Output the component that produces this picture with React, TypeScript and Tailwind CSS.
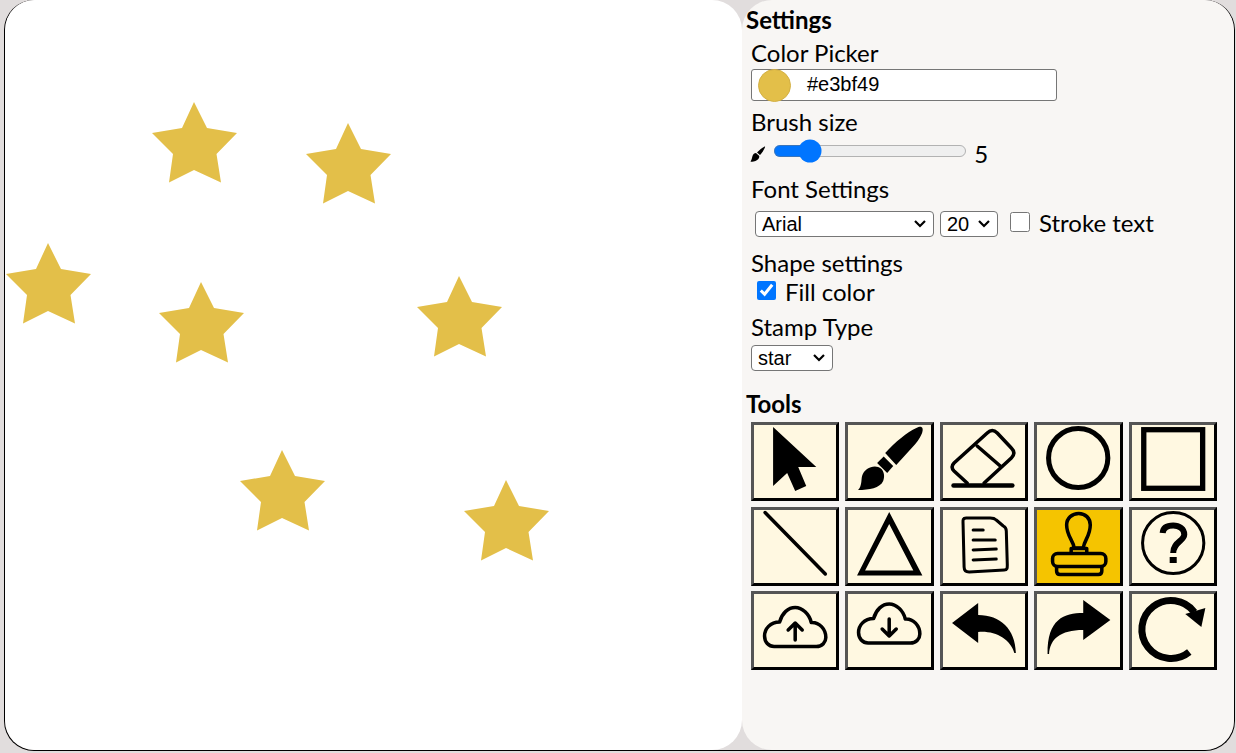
import React from 'react';

const stars = [
  [194, 102],
  [348, 123],
  [48, 243],
  [201, 282],
  [459, 276],
  [282, 450],
  [506, 480],
];

function Icon({ children }: { children: React.ReactNode }) {
  return (
    <svg viewBox="3 3 82 73" preserveAspectRatio="none" className="block w-full h-full">
      {children}
    </svg>
  );
}

const cloud =
  'M23 55.5 H65 C71 55.5 74.5 51 74.5 46.5 C74.5 38 68 31 60 31.5 C58 23 51 16.5 44 16.5 C37 16.5 31 22 28.5 31 C19 31 13.5 38 13.5 45 C13.5 51 17.5 55.5 23 55.5 Z';

const icons: React.ReactNode[] = [
  <path key="cursor" d="M22 5 L65 45 L47 45 L55 64 L44 69 L36 51 L22 64 Z" />,
  <g key="brush">
    <path d="M76 5 C79 6 77 14 70 22 L51 43 L40 31 C50 20 62 10 71 6 C73 5 75 4.500 76 5 Z" />
    <path d="M32 41 L38.500 34.500 L48 44 L42 51 Z" />
    <path d="M13 68 C17 64 16 58 17 54 C19 47 27 43 33 45 C39 47 40 54 38 59 C35 66 24 68 13 68 Z" />
  </g>,
  <g key="eraser" fill="none" stroke="black" strokeWidth="3.500" strokeLinecap="round">
    <path d="M27 61 L14 49 Q10 45 14 41 L47 11 Q52 6 57 11 L71 26 Q76 31 71 36 L44 61" />
    <path d="M37 24 L60 44" />
    <path d="M13.500 63.500 H72" strokeWidth="4.500" />
  </g>,
  <circle key="circle" cx="44" cy="36" r="29.5" fill="none" stroke="black" strokeWidth="5" />,
  <rect key="square" x="14.700" y="7.700" width="58.600" height="58.600" fill="none" stroke="black" strokeWidth="5.300" />,
  <path key="line" d="M14 5.500 L74 67" stroke="black" strokeWidth="3.500" strokeLinecap="round" />,
  <path key="triangle" fillRule="evenodd" d="M44 5 L77 68.500 L12 68.500 Z M44 17 L20 63.500 L68 63.500 Z" />,
  <g key="doc" fill="none" stroke="black" strokeWidth="3" strokeLinecap="round" strokeLinejoin="round">
    <path d="M26 11 C22 11 23 14 23 18 L24 60 C24 64 26 65 29 65 L64 63 C67 63 67 61 67 58 L66 24 C66 21 65 20 63 19 L56 13 C54 11 52 11 50 11 Z" />
    <path d="M33 23 H43 M33 33 H55 M33 43 L56 42 M33 53 L56 52" />
  </g>,
  <g key="stamp" fill="none" stroke="black" strokeWidth="3.500" strokeLinejoin="round">
    <path d="M40 41 C39 33 32.500 29 32.500 18 C32.500 11 38 6.500 44.500 6.500 C51 6.500 56 11 56 18 C56 29 50 33 49 41 Z" />
    <path d="M37 46 V41.500 H52.500 V46" />
    <rect x="18.500" y="46.500" width="53" height="13" rx="5" />
    <path d="M22.500 60 V64 Q22.500 67.500 26 67.500 H64 Q67.500 67.500 67.500 64 V60" />
  </g>,
  <g key="help">
    <circle cx="44" cy="36" r="30.500" fill="none" stroke="black" strokeWidth="3" />
    <path d="M33.500 26 C34 20 39 18.500 44 18.500 C50 18.500 55 22 55 27.500 C55 34 44 35 44 46" fill="none" stroke="black" strokeWidth="6" />
    <rect x="40.500" y="50" width="7" height="6" />
  </g>,
  <g key="upload" fill="none" stroke="black" strokeWidth="3.500" strokeLinecap="round" strokeLinejoin="round">
    <path d={cloud} />
    <path d="M44 49 V32 M37 39 L44 32 L51 39" />
  </g>,
  <g key="download" fill="none" stroke="black" strokeWidth="3.500" strokeLinecap="round" strokeLinejoin="round">
    <path d={cloud} transform="translate(0 -3.500)" />
    <path d="M44 28 V45 M37 38 L44 45 L51 38" />
  </g>,
  <path key="undo" d="M12 32 L38 12 V24 C60 24 75 38 75.500 62 L74 62 C70 48 55 39.500 38 41 V52 Z" />,
  <path key="redo" d="M76 29 L49 9 V22 C30 22 13 28 13.500 63 L15 63 C16 48 26 39 49 39 V49 Z" />,
  <g key="reset">
    <path d="M60 61 A29 29 0 1 1 65 21" fill="none" stroke="black" strokeWidth="7" />
    <path d="M76 17 L72 36 L56 23 Z" />
  </g>,
];

function Field({ children, className }: { children: React.ReactNode; className: string }) {
  return <div className={className}>{children}</div>;
}

function Select({ value, className }: { value: string; className: string }) {
  return (
    <div className={`relative h-[26px] ${className}`}>
      <select
        defaultValue={value}
        className="block w-full h-full pl-[6px] bg-white border border-[#767676] rounded-[4px] font-['Liberation_Sans',sans-serif] text-xl leading-none appearance-none"
      >
        <option>{value}</option>
      </select>
      <svg viewBox="0 0 12 8" className="absolute right-[8px] top-[9px] w-3 h-2 pointer-events-none">
        <path d="M1 1 L6 6 L11 1" fill="none" stroke="black" strokeWidth="2.200" />
      </svg>
    </div>
  );
}

export default function App() {
  return (
    <div className="h-[753px] bg-[#e1dddd] pl-1 pr-[1px] pb-[2px] font-['Lato',sans-serif] text-black">
      <div className="flex h-full border border-black rounded-[30px] border-t-0 overflow-hidden">
        <div className="relative w-[737px] bg-white rounded-[30px]">
          <svg className="absolute top-0 left-[-5px] w-[737px] h-[750px]" viewBox="0 0 737 750">
            {stars.map(([x, y]) => (
              <polygon
                key={x}
                transform={`translate(${x} ${y})`}
                fill="#e3bf49"
                points="0,0 13,26 43,31 22.500,52 27,80.500 0,68 -25,80.500 -21,52 -42,31 -12,26"
              />
            ))}
          </svg>
        </div>
        <div className="flex-1 bg-[#f8f6f4] rounded-[30px] pl-[4px] pt-[5px]">
          <h2 className="text-2xl font-bold leading-[29px]">Settings</h2>
          <div className="pl-[5px]">
            <Field className="mt-[4px]">
              <div className="text-2xl leading-[29px]">Color Picker</div>
              <div className="relative flex items-center w-[306px] h-[32px] mt-[2px] bg-white border border-[#767676] rounded-[3px]">
                <span className="w-[33px] h-[33px] ml-[6px] shrink-0 rounded-full bg-[#e3bf49] border border-[#d3b044]" />
                <span className="ml-[16px] pb-[2px] font-['Liberation_Sans',sans-serif] text-xl">#e3bf49</span>
              </div>
            </Field>
            <Field className="mt-[6px]">
              <div className="text-2xl leading-[29px]">Brush size</div>
              <div className="flex items-center h-[28px]">
                <svg viewBox="0 0 16 16" className="w-4 h-4 mt-[8px] -ml-[1px] shrink-0">
                  <path d="M15 .5 C15.500 1 13 6 10 9 L7 6.500 C10 3.500 14 .5 15 .5 Z" />
                  <path d="M6 7 L9.300 10 C9.500 12 8 14 5.500 15 C3.500 15.800 1.500 15.800 .5 15.500 C2 13.500 1.800 12 2.500 10 C3 8 4.500 7 6 7 Z" />
                </svg>
                <input
                  type="range"
                  min={1}
                  max={28}
                  defaultValue={5}
                  className="w-[129.7px] ml-[4.4px] mt-[1.4px] accent-[#0075ff] [zoom:1.5]"
                />
                <span className="text-2xl leading-none ml-[7px] mt-[8px]">5</span>
              </div>
            </Field>
            <Field className="mt-[10px]">
              <div className="text-2xl leading-[29px]">Font Settings</div>
              <div className="flex items-center mt-[7px] pl-[4px]">
                <Select value="Arial" className="w-[179px]" />
                <Select value="20" className="w-[58px] ml-[6px]" />
                <input type="checkbox" className="w-[20px] h-[20px] ml-[12px] mb-[5px]" />
                <span className="text-2xl leading-[26px] ml-[9px] mb-[2px]">Stroke text</span>
              </div>
            </Field>
            <Field className="mt-[10px]">
              <div className="text-2xl leading-[29px]">Shape settings</div>
              <div className="flex items-center pl-[6px]">
                <input type="checkbox" defaultChecked className="w-[19px] h-[19px] accent-[#0075ff] mb-[3px]" />
                <span className="text-2xl leading-[29px] ml-[9px]">Fill color</span>
              </div>
            </Field>
            <Field className="mt-[6px]">
              <div className="text-2xl leading-[29px]">Stamp Type</div>
              <Select value="star" className="w-[82px] mt-[4px]" />
            </Field>
          </div>
          <h2 className="text-2xl font-bold leading-[29px] mt-[18px]">Tools</h2>
          <div className="grid grid-cols-5 w-[466px] ml-[5px] mt-[4px] gap-x-[6px] gap-y-[5.5px]">
            {icons.map((icon, i) => (
              <button
                key={i}
                className={`h-[79px] p-0 border-[3px] border-t-[#555] border-l-[#555] border-r-black border-b-black ${
                  i === 8 ? 'bg-[#f5c400]' : 'bg-[#fff8e1]'
                }`}
              >
                <Icon>{icon}</Icon>
              </button>
            ))}
          </div>
        </div>
      </div>
    </div>
  );
}
